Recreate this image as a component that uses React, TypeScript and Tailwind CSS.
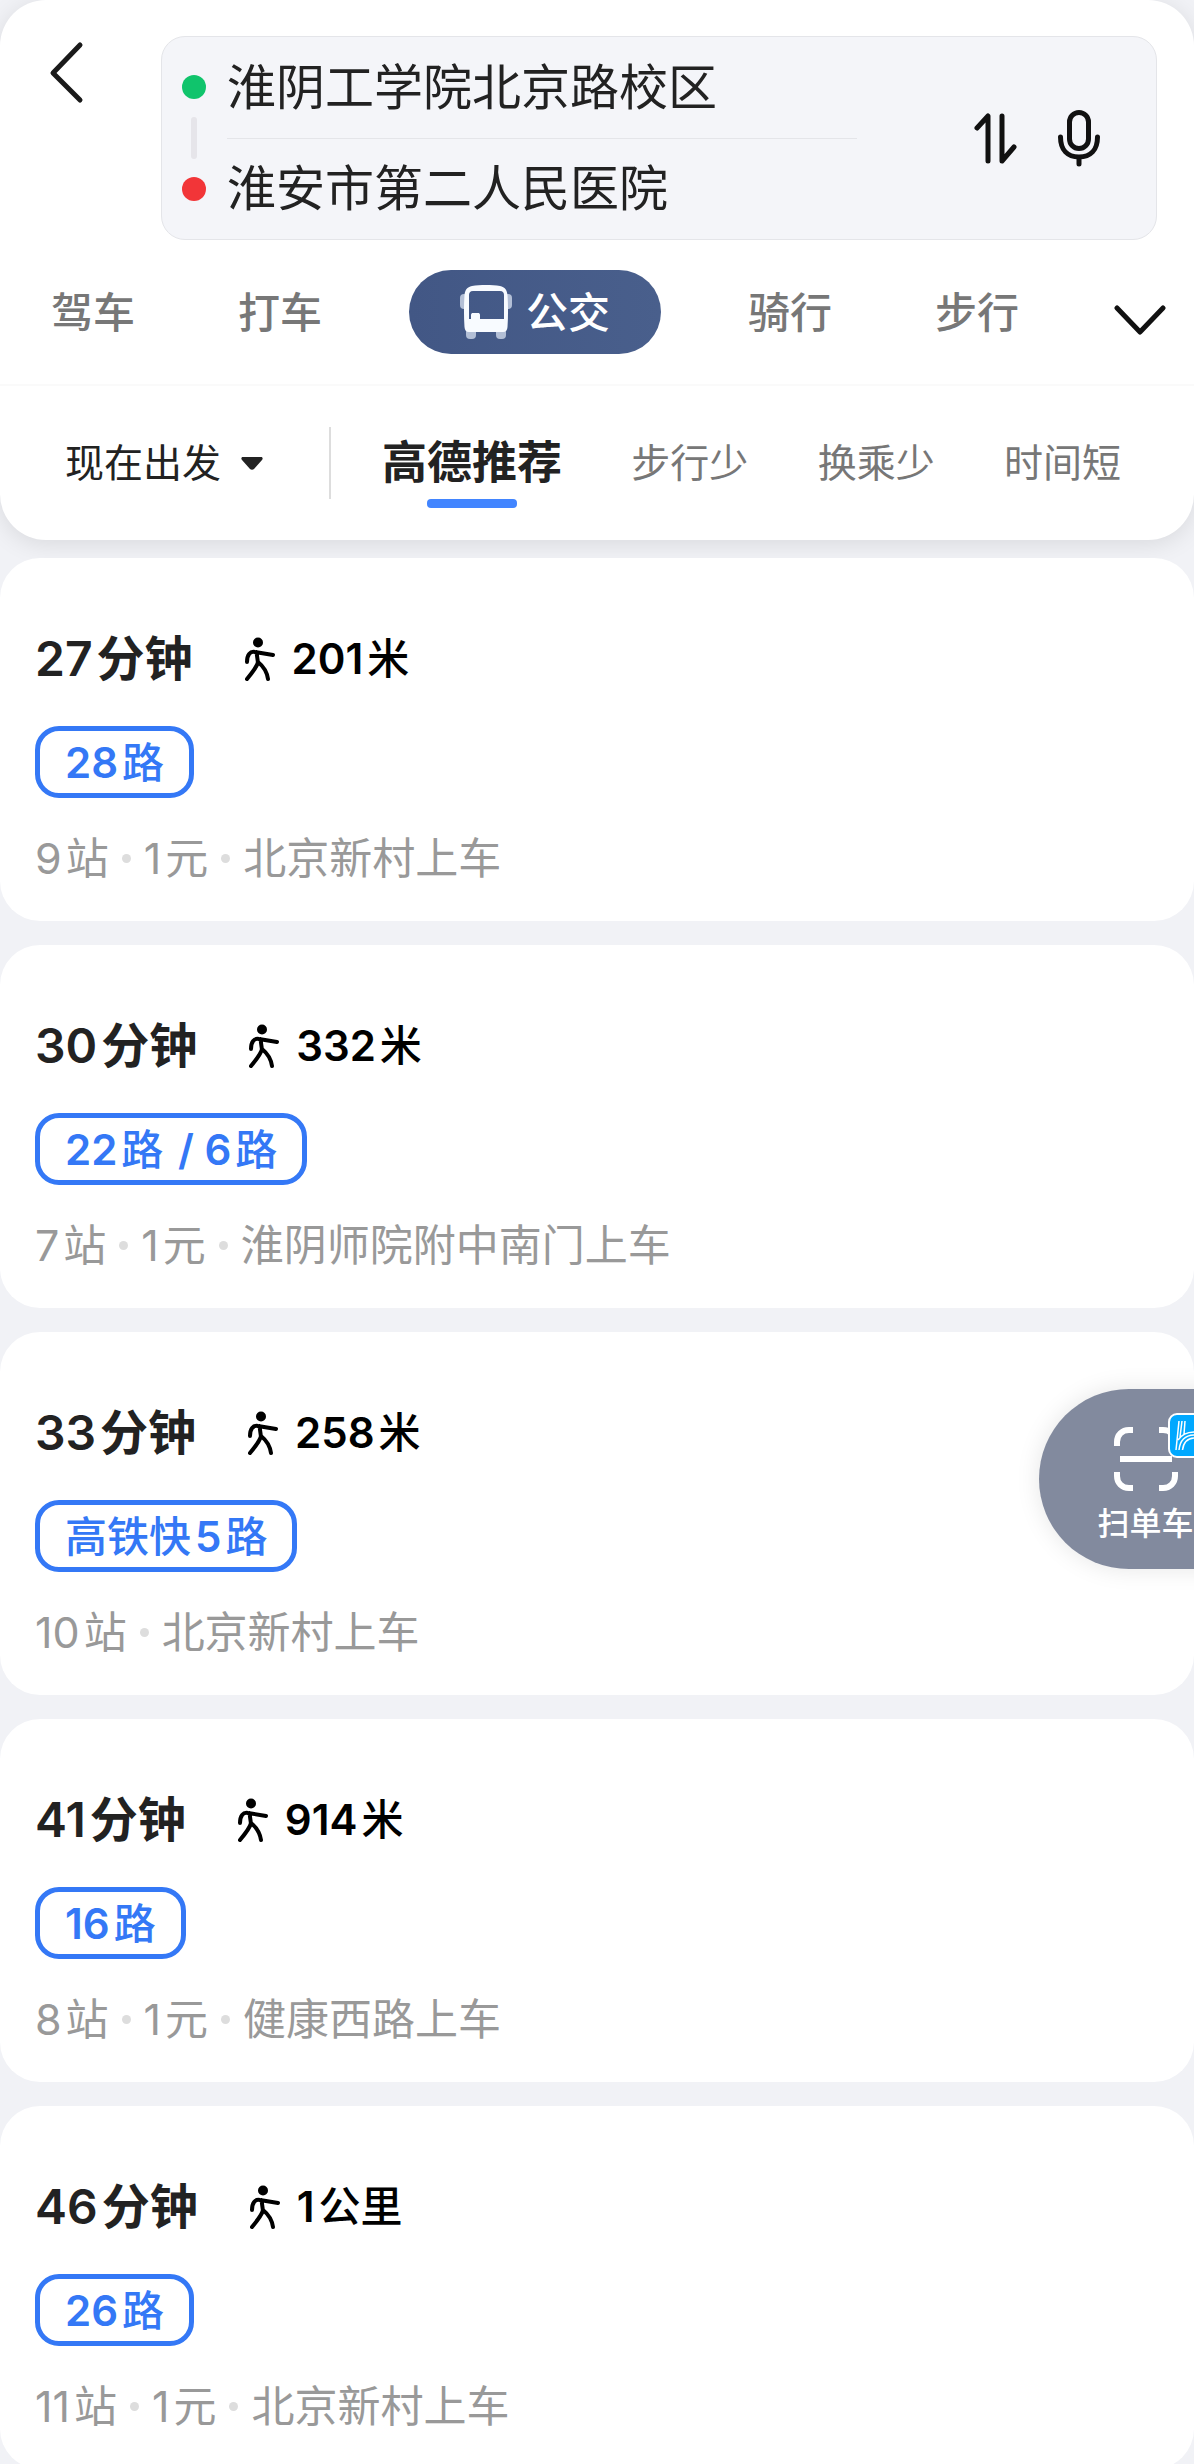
import { Fragment } from "react";

/* ─── data ─── */
const modes = ["驾车", "打车", "公交", "骑行", "步行"];

const sorts = ["步行少", "换乘少", "时间短"];

const routes = [
  { time: "27分钟", walk: "201米", line: "28路", details: ["9站", "1元", "北京新村上车"] },
  { time: "30分钟", walk: "332米", line: "22路 / 6路", details: ["7站", "1元", "淮阴师院附中南门上车"] },
  { time: "33分钟", walk: "258米", line: "高铁快5路", details: ["10站", "北京新村上车"] },
  { time: "41分钟", walk: "914米", line: "16路", details: ["8站", "1元", "健康西路上车"] },
  { time: "46分钟", walk: "1公里", line: "26路", details: ["11站", "1元", "北京新村上车"] },
];

/* ─── icons ─── */
function BusIcon() {
  return (
    <svg viewBox="0 0 52 54" className="w-[52px] h-[54px]" fill="none">
      <rect x="0" y="9" width="8" height="15" rx="4" fill="#b3bfd6" />
      <rect x="44" y="9" width="8" height="15" rx="4" fill="#b3bfd6" />
      <rect x="6" y="43" width="10" height="11" rx="4" fill="#b3bfd6" />
      <rect x="36" y="43" width="10" height="11" rx="4" fill="#b3bfd6" />
      <path
        fillRule="evenodd"
        clipRule="evenodd"
        d="M12 1c8-1.300 20-1.300 28 0 5 1 7 4 7.500 9 .7 10 .7 22 0 32-.2 3-1.500 5-4.500 5H9c-3 0-4.300-2-4.500-5-.7-10-.7-22 0-32C5 5 7 2 12 1Zm1 5c-3 0-4 2-4 4v24h2v-4c0-1.500 1-2 2-2h5c1 0 2 .5 2 2v4h24V10c0-2-1-4-4-4H13Z"
        fill="#f8fbff"
      />
    </svg>
  );
}

function WalkIcon() {
  return (
    <svg viewBox="0 0 30 44" className="w-[30px] h-11" fill="none" stroke="#000" strokeWidth="4" strokeLinecap="round" strokeLinejoin="round">
      <circle cx="13" cy="5.500" r="5" fill="#000" stroke="none" />
      <path d="M2 25c0-7 3-11 8-10l18 3M11.500 15 13 26M13 25c-1 5-6 11-11 17M13 25c5 4 9 10 10 17" />
    </svg>
  );
}

function SwapIcon() {
  return (
    <svg viewBox="0 0 44 58" className="w-11 h-[58px]" fill="none" stroke="#111" strokeWidth="5" strokeLinecap="round" strokeLinejoin="round">
      <path d="M3 19 14 7v45M28 7v45l12-14" />
    </svg>
  );
}

function MicIcon() {
  return (
    <svg viewBox="0 0 42 58" className="w-[42px] h-[58px]" fill="none" stroke="#111" strokeWidth="5" strokeLinecap="round">
      <rect x="11.500" y="3.500" width="19" height="36" rx="9.500" />
      <path d="M2.500 28c0 13 7 20 18.500 20s18.500-7 18.500-20M21 49v6" />
    </svg>
  );
}

function ScanIcon() {
  return (
    <svg viewBox="0 0 64 64" className="w-16 h-16" fill="none" stroke="#fff" strokeWidth="6">
      <path d="M3 19v-4C3 8 8 3 15 3h4M45 3h4c7 0 12 5 12 12v4M61 45v4c0 7-5 12-12 12h-4M19 61h-4C8 61 3 56 3 49v-4M6 32h52" />
    </svg>
  );
}

function BikeBadge() {
  return (
    <svg viewBox="0 0 45 45" className="absolute left-[129px] top-6 w-[45px] h-[45px]" fill="none" stroke="#fff">
      <rect x="1" y="1" width="43" height="43" rx="8" fill="#00a8ff" strokeWidth="2" />
      <path
        d="M11 8 8 37M14 8l-2 16M17 8l-1 13M10 27c4-6 9-8 17-8h8M11 37c1-10 6-15 16-15h8M14.500 37c1-8 5-12 12.500-12h8M36 8l-3 29"
        strokeWidth="1.500"
      />
    </svg>
  );
}

/* digits and Chinese characters get a small gap where they meet */
function Mixed({ text, hanClass }: { text: string; hanClass?: string }) {
  const parts = text.match(/[\d/ ]+|[^\d/ ]+/g) ?? [];
  return (
    <span className="inline-flex gap-1 whitespace-pre">
      {parts.map((p, i) => (
        <span key={i} className={/[\d/]/.test(p) ? undefined : hanClass}>
          {p}
        </span>
      ))}
    </span>
  );
}

function RouteCard({ route }: { route: (typeof routes)[number] }) {
  return (
    <article className="bg-white rounded-[40px] px-[35px] pt-[66px] pb-[31px]">
      <div className="flex items-center gap-[52px] h-[70px]">
        <h2 className="text-[48px] leading-[70px] font-semibold text-[#222]">
          <Mixed text={route.time} />
        </h2>
        <p className="flex items-center gap-[17px] text-[42px] leading-[70px] font-semibold text-black">
          <WalkIcon />
          <Mixed text={route.walk} hanClass="font-medium" />
        </p>
      </div>
      <div className="mt-8 flex">
        <span className="h-[72px] px-[25px] flex items-center rounded-[24px] border-[5px] border-[#3478f6] text-[42px] font-semibold text-[#3478f6]">
          <Mixed text={route.line} hanClass="font-medium" />
        </span>
      </div>
      <p className="mt-7 flex items-center gap-[13px] text-[43px] leading-[64px] text-[#999]">
        {route.details.map((d, i) => (
          <Fragment key={d}>
            {i > 0 && <span className="w-[9px] h-[9px] rounded-full bg-[#ddd]" />}
            <Mixed text={d} />
          </Fragment>
        ))}
      </p>
    </article>
  );
}

/* ─── page ─── */
export default function App() {
  return (
    <main className="relative h-screen flex flex-col overflow-hidden bg-[#f1f2f6] font-[Inter,'Noto_Sans_CJK_SC',sans-serif]">
      <header className="shrink-0 bg-white rounded-[46px] shadow-[0_4px_24px_rgba(0,0,0,0.1)]">
        <div className="flex items-start pt-9 pr-[37px]">
          <button aria-label="返回" className="w-[161px] h-[72px] pl-[49px] cursor-pointer">
            <svg viewBox="0 0 36 70" className="w-9 h-[70px]" fill="none" stroke="#1a1a1a" strokeWidth="5" strokeLinecap="round" strokeLinejoin="round">
              <path d="M31 8 4 36l27 27" />
            </svg>
          </button>
          <div className="flex-1 h-[204px] flex items-center rounded-[24px] border border-[#e4e5e9] bg-[#f4f5f9] pl-5 pr-14">
            <div className="flex flex-col items-center gap-[18px]">
              <span className="w-6 h-6 rounded-full bg-[#10c46c]" />
              <span className="w-[6px] h-[42px] rounded-sm bg-[#e6e5ea]" />
              <span className="w-6 h-6 rounded-full bg-[#f23538]" />
            </div>
            <div className="ml-[21px] w-[630px] text-[49px] text-[#222]">
              <p className="h-[101px] flex items-center">淮阴工学院北京路校区</p>
              <p className="h-[101px] flex items-center border-t border-[#e4e5e9]">淮安市第二人民医院</p>
            </div>
            <div className="ml-auto flex gap-10">
              <button aria-label="交换起终点" className="cursor-pointer">
                <SwapIcon />
              </button>
              <button aria-label="语音输入" className="cursor-pointer">
                <MicIcon />
              </button>
            </div>
          </div>
        </div>

        <nav className="flex items-center justify-between pl-[51px] pr-7 h-[146px] border-b-2 border-[#fafafa] text-[42px] font-medium text-[#777]">
          {modes.map((m) =>
            m === "公交" ? (
              <button key={m} className="-mx-4 h-[84px] px-[51px] flex items-center gap-[14px] rounded-full bg-linear-to-r from-[#425785] to-[#495f8c] text-white cursor-pointer">
                <BusIcon />
                {m}
              </button>
            ) : (
              <button key={m} className="cursor-pointer">
                {m}
              </button>
            ),
          )}
          <button aria-label="更多" className="-ml-2 pt-4 cursor-pointer">
            <svg viewBox="0 0 52 30" className="w-[52px] h-[30px]" fill="none" stroke="#111" strokeWidth="5" strokeLinecap="round" strokeLinejoin="round">
              <path d="M3 3l23 24L49 3" />
            </svg>
          </button>
        </nav>

        <div className="flex items-center h-[154px] pl-[65px] pr-[73px] text-[39px]">
          <button className="flex items-center gap-5 text-[#222] cursor-pointer">
            现在出发
            <svg viewBox="0 0 22 13" className="w-[22px] h-[13px]" fill="#222">
              <path d="M2 0h18c2 0 2 2 1 3l-8 9c-1 1-3 1-4 0L1 3C0 2 0 0 2 0Z" />
            </svg>
          </button>
          <span className="ml-[66px] w-[2px] h-[72px] bg-[#ddd]" />
          <div className="ml-[51px] flex-1 flex items-center justify-between text-[#777]">
            <button className="flex flex-col items-center h-[92px] text-[45px] leading-[92px] font-bold text-[#222] cursor-pointer">
              高德推荐
              <span className="-mt-[10px] w-[90px] h-[9px] shrink-0 rounded-[4px] bg-[#4285ff]" />
            </button>
            {sorts.map((s) => (
              <button key={s} className="cursor-pointer">
                {s}
              </button>
            ))}
          </div>
        </div>
      </header>

      <section className="mt-[18px] flex-1 min-h-0 overflow-y-auto space-y-6 [scrollbar-width:none]">
        {routes.map((r) => (
          <RouteCard key={r.line} route={r} />
        ))}
      </section>

      <button className="absolute right-[-58px] top-[1389px] w-[213px] h-[180px] flex flex-col items-center pt-[38px] rounded-l-full bg-[#828a9e] shadow-[0_0_24px_rgba(0,0,0,0.1)] text-[32px] leading-[66px] font-medium text-white cursor-pointer">
        <ScanIcon />
        <BikeBadge />
        <span className="whitespace-nowrap">扫单车</span>
      </button>
    </main>
  );
}
